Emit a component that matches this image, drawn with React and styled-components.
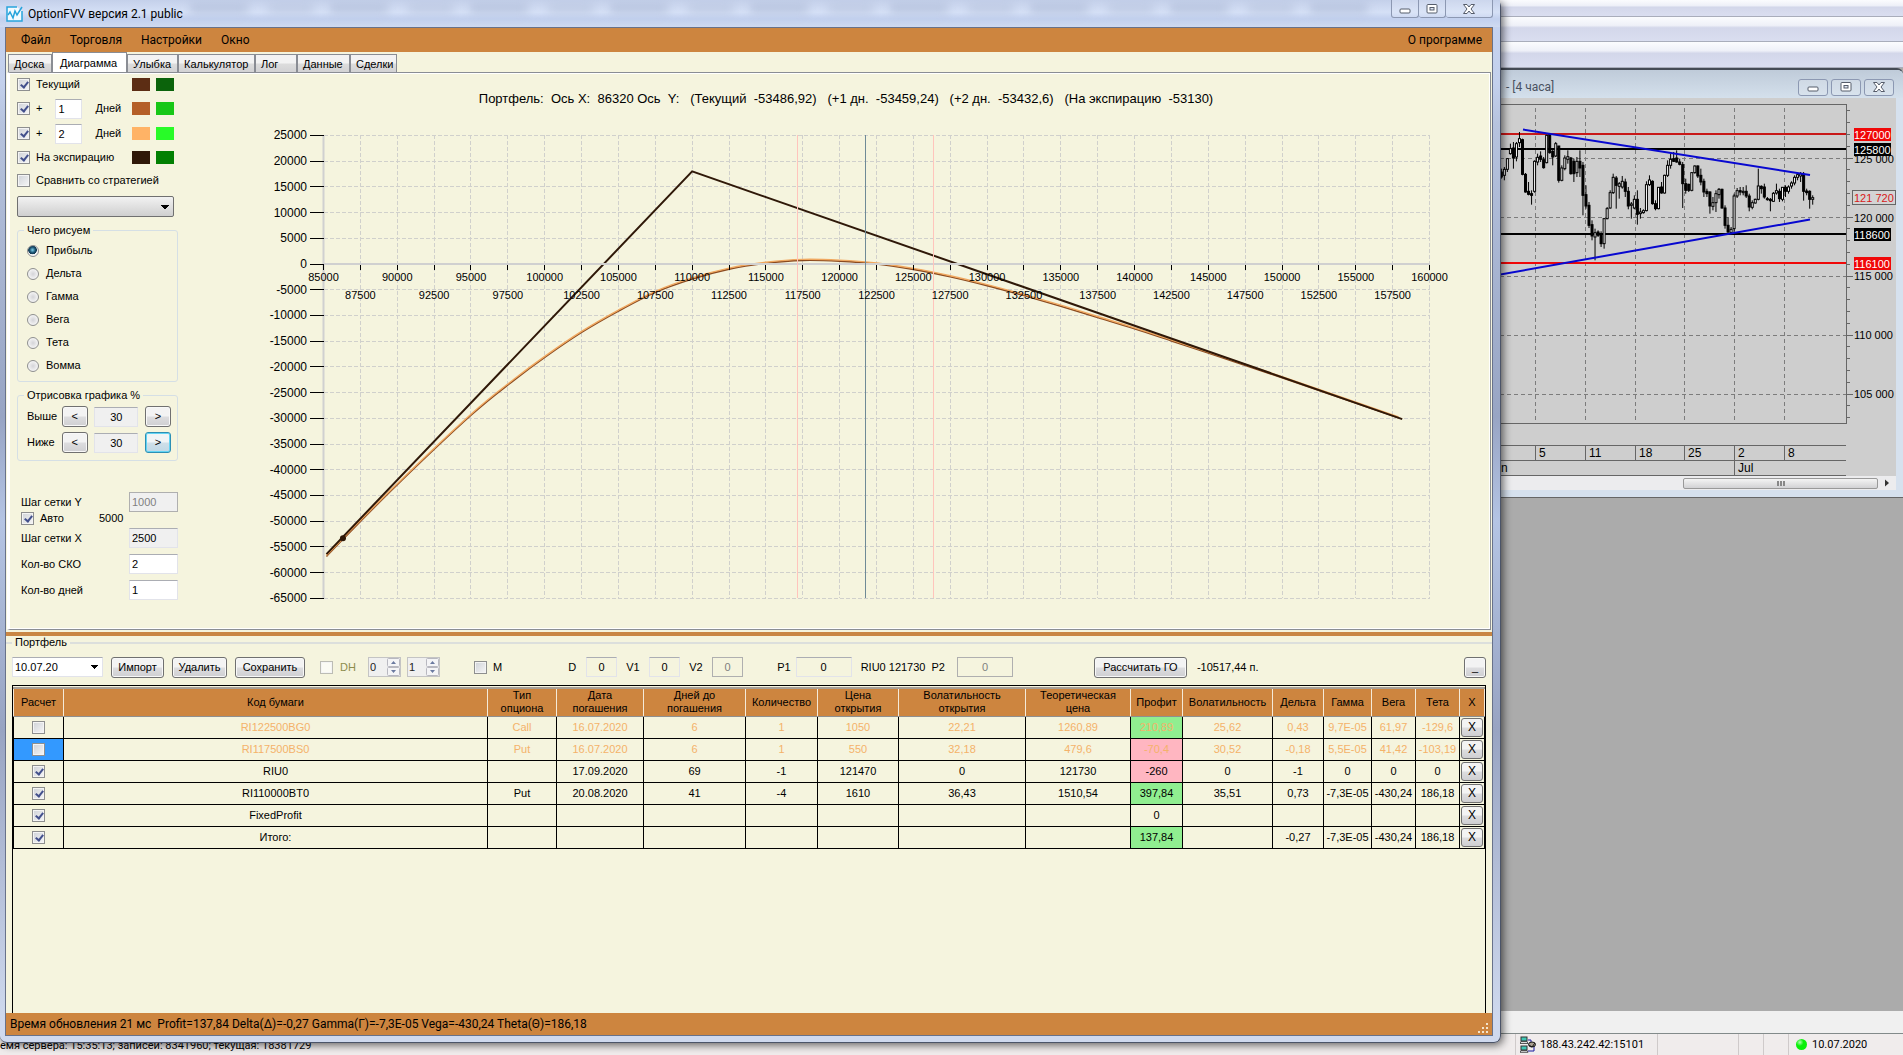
import React, {useState} from 'react';
import styled, {createGlobalStyle} from 'styled-components';

const MENU = ['Файл', 'Торговля', 'Настройки', 'Окно'];

const TABS = [
    {name: 'Доска', width: 44},
    {name: 'Диаграмма', width: 75},
    {name: 'Улыбка', width: 51},
    {name: 'Калькулятор', width: 77},
    {name: 'Лог', width: 42},
    {name: 'Данные', width: 53},
    {name: 'Сделки', width: 47},
];

const GREEKS = ['Прибыль', 'Дельта', 'Гамма', 'Вега', 'Тета', 'Вомма'];

const COLUMNS = [
    {title: 'Расчет', width: 50},
    {title: 'Код бумаги'},
    {title: 'Тип\nопциона', width: 69},
    {title: 'Дата\nпогашения', width: 87},
    {title: 'Дней до\nпогашения', width: 102},
    {title: 'Количество', width: 72},
    {title: 'Цена\nоткрытия', width: 81},
    {title: 'Волатильность\nоткрытия', width: 127},
    {title: 'Теоретическая\nцена', width: 105},
    {title: 'Профит', width: 52},
    {title: 'Волатильность', width: 90},
    {title: 'Дельта', width: 51},
    {title: 'Гамма', width: 48},
    {title: 'Вега', width: 44},
    {title: 'Тета', width: 44},
    {title: 'X', width: 25},
];

const POSITIONS = [
    {off: true, mark: 'up', cells: ['RI122500BG0', 'Call', '16.07.2020', '6', '1', '1050', '22,21', '1260,89', '210,89', '25,62', '0,43', '9,7E-05', '61,97', '-129,6']},
    {off: true, selected: true, mark: 'down', cells: ['RI117500BS0', 'Put', '16.07.2020', '6', '1', '550', '32,18', '479,6', '-70,4', '30,52', '-0,18', '5,5E-05', '41,42', '-103,19']},
    {mark: 'down', cells: ['RIU0', '', '17.09.2020', '69', '-1', '121470', '0', '121730', '-260', '0', '-1', '0', '0', '0']},
    {mark: 'up', cells: ['RI110000BT0', 'Put', '20.08.2020', '41', '-4', '1610', '36,43', '1510,54', '397,84', '35,51', '0,73', '-7,3E-05', '-430,24', '186,18']},
    {cells: ['FixedProfit', '', '', '', '', '', '', '', '0', '', '', '', '', '']},
    {mark: 'up', cells: ['Итого:', '', '', '', '', '', '', '', '137,84', '', '-0,27', '-7,3E-05', '-430,24', '186,18']},
];

const PROFIT_CELL = 8;

// price, profit
const CURRENT = [
    [85200, -56850], [86320, -53487], [90000, -42900], [95000, -29400], [97930, -22560], [100000, -18150],
    [102500, -13300], [105000, -9150], [107500, -5500], [110000, -2900], [112500, -1000], [115000, 150],
    [117500, 700], [120000, 550], [122500, 0], [125000, -1050], [127500, -2470], [130000, -4200],
    [132500, -6130], [135000, -8200], [137500, -10400], [140000, -12600], [142500, -14950],
    [145000, -17300], [150000, -22100], [157900, -29900],
];

const EXPIRATION = [[85200, -56400], [110000, 18000], [158150, -30150]];

// high, open, close, low in thirds of a pixel
const CANDLES = [
    [140, 150, 165, 170], [135, 160, 142, 175], [108, 142, 110, 150], [65, 95, 80, 98], [60, 78, 108, 140],
    [60, 105, 65, 118], [30, 62, 50, 75], [50, 53, 157, 160], [153, 157, 210, 212], [180, 208, 217, 220],
    [205, 215, 220, 248], [115, 208, 118, 212], [95, 120, 106, 130], [88, 102, 112, 120], [105, 113, 137, 140],
    [38, 122, 40, 124], [38, 38, 92, 95], [80, 88, 105, 130], [60, 102, 65, 105], [72, 72, 175, 182],
    [130, 175, 138, 178], [100, 140, 108, 145], [85, 112, 104, 125], [105, 108, 155, 158], [110, 118, 155, 180],
    [105, 152, 118, 165], [85, 118, 138, 165], [120, 130, 220, 280], [190, 218, 252, 260], [240, 250, 310, 318],
    [295, 308, 342, 355], [320, 345, 332, 415], [325, 330, 340, 345], [328, 340, 365, 375], [288, 365, 290, 380],
    [255, 290, 260, 292], [205, 258, 212, 260], [155, 212, 166, 216], [162, 168, 190, 260], [180, 193, 185, 230],
    [162, 195, 178, 200], [170, 180, 208, 225], [195, 208, 252, 262], [240, 250, 246, 290], [220, 258, 232, 262],
    [205, 232, 277, 308], [258, 275, 270, 290], [262, 272, 266, 275], [178, 266, 188, 268], [160, 188, 174, 192],
    [175, 178, 245, 248], [235, 245, 260, 265], [195, 260, 196, 262], [180, 195, 213, 215], [158, 213, 160, 215],
    [115, 160, 130, 165], [95, 130, 112, 140], [90, 110, 118, 120], [85, 108, 120, 122], [110, 120, 127, 130],
    [120, 128, 185, 258], [170, 185, 205, 215], [185, 187, 205, 210], [150, 205, 152, 208], [130, 152, 132, 155],
    [130, 132, 162, 168], [140, 160, 180, 190], [170, 178, 210, 225], [200, 208, 215, 225], [208, 210, 252, 275],
    [225, 253, 242, 265], [205, 242, 215, 270], [198, 218, 202, 230], [200, 202, 258, 260], [250, 258, 310, 320],
    [285, 310, 330, 335], [315, 332, 322, 335], [215, 320, 222, 330], [198, 222, 206, 228], [195, 206, 210, 220],
    [195, 212, 208, 220], [190, 208, 222, 228], [215, 222, 255, 268], [235, 256, 242, 262], [230, 243, 232, 245],
    [140, 232, 192, 235], [190, 193, 200, 215], [185, 195, 225, 230], [225, 230, 233, 236], [228, 232, 236, 268],
    [210, 238, 214, 240], [185, 213, 206, 218], [200, 208, 230, 240], [195, 232, 196, 238], [190, 196, 208, 225],
    [190, 208, 195, 215], [178, 192, 183, 200], [160, 183, 166, 190], [152, 166, 158, 175], [150, 162, 156, 180],
    [150, 157, 208, 236], [200, 207, 212, 220], [205, 208, 232, 260], [220, 232, 227, 248],
];

const px = (price) => 133.5 + (price - 85000) * 1106 / 75000;
const py = (profit) => 191 - profit * 0.005144;

const straight = (points) => points.map(([a, b], i) => `${i ? 'L' : 'M'}${px(a)} ${py(b)}`).join('');

const smooth = (points) => {
    const p = points.map(([a, b]) => [px(a), py(b)]);
    let d = `M${p[0][0]} ${p[0][1]}`;
    for (let i = 0; i < p.length - 1; i++) {
        const p0 = p[i - 1] || p[i];
        const p1 = p[i];
        const p2 = p[i + 1];
        const p3 = p[i + 2] || p2;
        const c1 = [p1[0] + (p2[0] - p0[0]) / 6, p1[1] + (p2[1] - p0[1]) / 6];
        const c2 = [p2[0] - (p3[0] - p1[0]) / 6, p2[1] - (p3[1] - p1[1]) / 6];
        d += `C${c1} ${c2} ${p2}`;
    }
    return d;
};

const range = (from, to, step) => {
    const list = [];
    for (let v = from; v <= to; v += step) list.push(v);
    return list;
};

const CaptionButtons = ({small}) => (
    <Captions $small={small}>
        <CaptionButton type="button" aria-label="Свернуть" $small={small} $width={28}>
            <svg width="14" height="12" viewBox="0 0 14 12"><rect x="2" y="6" width="10" height="4" rx="1" fill="#fff" stroke="#555c6a"/></svg>
        </CaptionButton>
        <CaptionButton type="button" aria-label="Развернуть" $small={small} $width={27}>
            <svg width="14" height="12" viewBox="0 0 14 12">
                <rect x="2" y="1.5" width="10" height="8.5" rx="1" fill="#fff" stroke="#555c6a"/>
                <rect x="5" y="4.5" width="4" height="2.5" fill="#dfe6f3" stroke="#555c6a"/>
            </svg>
        </CaptionButton>
        <CaptionButton type="button" aria-label="Закрыть" $small={small} $width={small ? 30 : 47}>
            <svg width="14" height="12" viewBox="0 0 14 12">
                <path d="M1.5 1.5H5L7 4L9 1.5H12.5L9 6L12.5 10.5H9L7 8L5 10.5H1.5L5 6Z" fill="#fff" stroke="#555c6a"/>
            </svg>
        </CaptionButton>
    </Captions>
);

const ProfitChart = () => (
    <ChartSvg viewBox="0 0 1300 556" preserveAspectRatio="xMinYMin meet">
        <g stroke="#d0d0cc" strokeDasharray="4 2" shapeRendering="crispEdges">
            {range(-65000, 25000, 5000).map((v) => <line key={v} x1={px(85000)} x2={px(160000)} y1={py(v)} y2={py(v)}/>)}
            {range(87500, 160000, 2500).map((v) => <line key={v} x1={px(v)} x2={px(v)} y1={py(25000)} y2={py(-65000)}/>)}
        </g>
        <line x1={px(85000)} x2={px(85000)} y1={py(25000)} y2={py(-65000)} stroke="#d0d0d0" strokeWidth="2"/>
        <g fill="none">
            <path d={smooth(CURRENT)} stroke="#8a4a20" strokeWidth="1.6"/>
            <path d={smooth(CURRENT)} transform="translate(0 -1)" stroke="#f0a860" strokeWidth="1.4"/>
            <path d={straight(EXPIRATION)} stroke="#2f1808" strokeWidth="2"/>
        </g>
        <circle cx={px(86320)} cy={py(-53300)} r="3" fill="#2f1808"/>
        <line x1={px(85000)} x2={px(160000)} y1={py(0)} y2={py(0)} stroke="#d0d0d0" strokeWidth="2"/>
        <g shapeRendering="crispEdges">
            <line x1="607.5" x2="607.5" y1={py(25000)} y2={py(-65000)} stroke="#ffc4bc"/>
            <line x1="743.5" x2="743.5" y1={py(25000)} y2={py(-65000)} stroke="#ffc4bc"/>
            <line x1="675.5" x2="675.5" y1={py(25000)} y2={py(-65000)} stroke="#6f8a96"/>
            {range(-65000, 25000, 5000).map((v) => <line key={v} x1="120" x2={px(85000)} y1={py(v)} y2={py(v)} stroke="#000"/>)}
            {range(85000, 160000, 2500).map((v) => <line key={v} x1={px(v)} x2={px(v)} y1={py(0) + 1} y2={py(0) + 6} stroke="#000"/>)}
        </g>
        <g fontSize="12" textAnchor="end">
            {range(-65000, 25000, 5000).map((v) => <text key={v} x="117" y={py(v) + 4}>{v}</text>)}
        </g>
        <g fontSize="11" textAnchor="middle">
            {range(85000, 160000, 2500).map((v) => (
                <text key={v} x={px(v)} y={py(0) + (v % 5000 ? 35 : 17)}>{v}</text>
            ))}
        </g>
    </ChartSvg>
);

const PriceChart = () => (
    <PriceSvg viewBox="0 0 410 378" preserveAspectRatio="xMaxYMin meet">
        <g stroke="#7c7c7c" strokeDasharray="4 3" shapeRendering="crispEdges">
            {[49, 99, 149, 198, 248, 298].map((x) => <line key={x} x1={x} x2={x} y1="10" y2="325"/>)}
            {[60, 119, 178, 237, 296].map((y) => <line key={y} x1="0" x2="360" y1={y} y2={y}/>)}
        </g>
        <g stroke="#666" fill="none" shapeRendering="crispEdges">
            <path d="M0 6.5H360.5V325.5H0M0 347.5H360M0 362.5H360M0 377.5H360"/>
            <path d="M49.5 347V362M99.5 347V362M149.5 347V362M198.5 347V362M248.5 347V377M298.5 347V362"/>
            {range(-4, 22, 1).map((k) => <line key={k} x1="360" x2={k % 5 ? 364 : 367} y1={60 + k * 11.8} y2={60 + k * 11.8}/>)}
        </g>
        <rect x="0" y="35" width="360" height="2" fill="#c81818"/>
        <rect x="0" y="50" width="360" height="2" fill="#000"/>
        <rect x="0" y="135" width="360" height="2" fill="#000"/>
        <rect x="0" y="164" width="360" height="2" fill="#f00808"/>
        <g transform="translate(10 24) scale(.3333)" stroke="#000" strokeWidth="3">
            {CANDLES.map(([high, open, close, low], i) => {
                const x = 16 + i * 9.07;
                return (
                    <g key={i}>
                        <line x1={x} x2={x} y1={high} y2={low}/>
                        <rect
                            x={x - 3} width="6" y={Math.min(open, close)} height={Math.abs(open - close)}
                            fill={close < open ? '#fff' : '#000'}
                        />
                    </g>
                );
            })}
        </g>
        <path d="M37 31.5L324 77M0 179L324 121.5" stroke="#0808d0" strokeWidth="2" fill="none"/>
        <g fontSize="11">
            <text x="368" y="65">125 000</text>
            <text x="368" y="124">120 000</text>
            <text x="368" y="182">115 000</text>
            <text x="368" y="241">110 000</text>
            <text x="368" y="300">105 000</text>
        </g>
        <rect x="368" y="30" width="37" height="13" fill="#f00808"/>
        <rect x="368" y="45" width="37" height="13" fill="#000"/>
        <rect x="368" y="130" width="37" height="13" fill="#000"/>
        <rect x="368" y="159" width="37" height="13" fill="#f00808"/>
        <rect x="366.5" y="92.5" width="43" height="14" fill="#d4d4d4" stroke="#666"/>
        <g fontSize="11" fill="#fff">
            <text x="368" y="41">127000</text>
            <text x="368" y="56">125800</text>
            <text x="368" y="141">118600</text>
            <text x="368" y="170">116100</text>
            <text x="368" y="104" fill="#d81818">121 720</text>
        </g>
        <g fontSize="12">
            <text x="53" y="359">5</text>
            <text x="103" y="359">11</text>
            <text x="153" y="359">18</text>
            <text x="202" y="359">25</text>
            <text x="252" y="359">2</text>
            <text x="302" y="359">8</text>
            <text x="15" y="374">n</text>
            <text x="252" y="374">Jul</text>
        </g>
    </PriceSvg>
);

const Spinner = ({label, value}) => (
    <SpinnerBox>
        <SpinnerInput aria-label={label} defaultValue={value} disabled/>
        <svg width="13" height="18" viewBox="0 0 13 18">
            <rect x=".5" y=".5" width="12" height="8" rx="1" fill="#f4f4f6" stroke="#b8b8c0"/>
            <rect x=".5" y="9.5" width="12" height="8" rx="1" fill="#f4f4f6" stroke="#b8b8c0"/>
            <path d="M4 6L6.5 3L9 6ZM4 12L6.5 15L9 12Z" fill="#6b7aa0"/>
        </svg>
    </SpinnerBox>
);

const Controls = () => {
    const [greek, setGreek] = useState('Прибыль');
    return (
        <Side>
            <Row $height={23}>
                <CheckLabel><Check defaultChecked/>Текущий</CheckLabel>
                <Swatches><Swatch $color="#5c2d14"/><Swatch $color="#0b630b"/></Swatches>
            </Row>
            <Row $height={25}>
                <CheckLabel><Check defaultChecked/>+</CheckLabel>
                <DayInput id="day1" defaultValue="1"/>
                <label htmlFor="day1">Дней</label>
                <Swatches><Swatch $color="#b45f28"/><Swatch $color="#17c717"/></Swatches>
            </Row>
            <Row $height={25}>
                <CheckLabel><Check defaultChecked/>+</CheckLabel>
                <DayInput id="day2" defaultValue="2"/>
                <label htmlFor="day2">Дней</label>
                <Swatches><Swatch $color="#ffb366"/><Swatch $color="#28fb28"/></Swatches>
            </Row>
            <Row $height={23}>
                <CheckLabel><Check defaultChecked/>На экспирацию</CheckLabel>
                <Swatches><Swatch $color="#2f1808"/><Swatch $color="#028002"/></Swatches>
            </Row>
            <Row $height={23}>
                <CheckLabel><Check/>Сравнить со стратегией</CheckLabel>
            </Row>
            <StrategySelect aria-label="Стратегия"><option></option></StrategySelect>

            <Group>
                <Legend>Чего рисуем</Legend>
                <RadioList>
                    {GREEKS.map((name) => (
                        <RadioLabel key={name}>
                            <Radio name="greek" checked={greek === name} onChange={() => setGreek(name)}/>
                            {name}
                        </RadioLabel>
                    ))}
                </RadioList>
            </Group>

            <Group>
                <Legend>Отрисовка графика %</Legend>
                <RangeList>
                    <RangeRow>
                        <label htmlFor="above">Выше</label>
                        <Button type="button" $width={26}>&lt;</Button>
                        <RangeInput id="above" defaultValue="30" readOnly/>
                        <Button type="button" $width={26}>&gt;</Button>
                    </RangeRow>
                    <RangeRow>
                        <label htmlFor="below">Ниже</label>
                        <Button type="button" $width={26}>&lt;</Button>
                        <RangeInput id="below" defaultValue="30" readOnly/>
                        <Button type="button" $width={26} $active>&gt;</Button>
                    </RangeRow>
                </RangeList>
            </Group>

            <Steps>
                <StepRow $height={20}>
                    <label htmlFor="stepY">Шаг сетки Y</label>
                    <StepInput id="stepY" defaultValue="1000" disabled/>
                </StepRow>
                <StepRow $height={13}>
                    <CheckLabel><Check defaultChecked/>Авто</CheckLabel>
                    <AutoValue>5000</AutoValue>
                </StepRow>
                <StepRow $height={26}>
                    <label htmlFor="stepX">Шаг сетки X</label>
                    <StepInput id="stepX" defaultValue="2500" readOnly/>
                </StepRow>
                <StepRow $height={26}>
                    <label htmlFor="sko">Кол-во СКО</label>
                    <StepInput id="sko" defaultValue="2"/>
                </StepRow>
                <StepRow $height={26}>
                    <label htmlFor="days">Кол-во дней</label>
                    <StepInput id="days" defaultValue="1"/>
                </StepRow>
            </Steps>
        </Side>
    );
};

const Portfolio = () => (
    <PortfolioBox>
        <PortfolioLegend>Портфель</PortfolioLegend>
        <Toolbar>
            <ToolGroup $gap={8}>
                <DateSelect aria-label="Дата"><option>10.07.20</option></DateSelect>
                <Button type="button" $width={53}>Импорт</Button>
                <Button type="button" $width={55}>Удалить</Button>
                <Button type="button" $width={70}>Сохранить</Button>
            </ToolGroup>
            <ToolGroup $gap={6} $left={15}>
                <DimLabel><Check disabled/>DH</DimLabel>
                <SpinnerPair>
                    <Spinner label="DH 1" value="0"/>
                    <Spinner label="DH 2" value="1"/>
                </SpinnerPair>
            </ToolGroup>
            <ToolGroup $gap={6} $left={34}>
                <CheckLabel><Check/>M</CheckLabel>
            </ToolGroup>
            <ToolGroup $gap={9} $left={66}>
                <Field><label htmlFor="d">D</label><NumInput id="d" defaultValue="0"/></Field>
                <Field><label htmlFor="v1">V1</label><NumInput id="v1" defaultValue="0"/></Field>
                <Field><label htmlFor="v2">V2</label><NumInput id="v2" defaultValue="0" disabled/></Field>
            </ToolGroup>
            <ToolGroup $gap={5} $left={34}>
                <label htmlFor="p1">P1</label>
                <NumInput id="p1" defaultValue="0" $wide/>
            </ToolGroup>
            <ToolGroup $gap={6} $left={9}>
                <span>RIU0 121730</span>
                <label htmlFor="p2">P2</label>
            </ToolGroup>
            <ToolGroup $gap={9} $left={12}>
                <NumInput id="p2" defaultValue="0" disabled $wide/>
            </ToolGroup>
            <ToolGroup $gap={10} $left={81}>
                <Button type="button" $width={93}>Рассчитать ГО</Button>
                <span>-10517,44 п.</span>
            </ToolGroup>
            <CollapseButton type="button" $width={22}>_</CollapseButton>
        </Toolbar>
        <TableBox>
            <Table>
                <colgroup>
                    {COLUMNS.map((c) => <col key={c.title} width={c.width}/>)}
                </colgroup>
                <thead>
                    <tr>{COLUMNS.map((c) => <Th key={c.title}>{c.title}</Th>)}</tr>
                </thead>
                <tbody>
                    {POSITIONS.map((row) => (
                        <Tr key={row.cells[0]} $off={row.off}>
                            <Td $selected={row.selected}>
                                <Check aria-label={row.cells[0]} defaultChecked={!row.off}/>
                            </Td>
                            {row.cells.map((cell, i) => (
                                <Td key={i} $mark={i === PROFIT_CELL ? row.mark : undefined}>{cell}</Td>
                            ))}
                            <Td><RemoveButton type="button">X</RemoveButton></Td>
                        </Tr>
                    ))}
                </tbody>
            </Table>
        </TableBox>
    </PortfolioBox>
);

const App = () => (
    <Desktop>
        <GlobalStyle/>
        <TopBar $height={17}/>
        <TopBar $height={25}/>
        <TopBar $height={26}/>
        <Mdi>
            <QuoteWindow>
                <QuoteTitle>
                    - [4 часа]
                    <CaptionButtons small/>
                </QuoteTitle>
                <QuoteBody>
                    <PriceChart/>
                    <ScrollBar>
                        <Thumb><i/><i/><i/></Thumb>
                        <svg width="13" height="12" viewBox="0 0 13 12"><path d="M4 2.5L8 6L4 9.5Z" fill="#333"/></svg>
                    </ScrollBar>
                </QuoteBody>
            </QuoteWindow>
        </Mdi>
        <Strip/>
        <ServerBar>
            <ServerText>емя сервера: 15:35:13; записей: 8341960; текущая: 18381729</ServerText>
            <ServerCell $width={142}>
                <svg width="16" height="17" viewBox="0 0 16 17">
                    <rect x="1" y="1" width="6" height="4" fill="#3fc6b4" stroke="#333"/>
                    <path d="M0 7.500H8L7 5.500H1Z" fill="#ddd" stroke="#333" strokeWidth=".8"/>
                    <rect x="1" y="10" width="6" height="4" fill="#3fc6b4" stroke="#333"/>
                    <path d="M0 16.300H8L7 14.500H1Z" fill="#ddd" stroke="#333" strokeWidth=".8"/>
                    <path d="M8 4H11V6M8 15H14V10" fill="none" stroke="#1818a0"/>
                    <ellipse cx="12" cy="8.500" rx="3.500" ry="2.500" fill="#aaa090" stroke="#111"/>
                    <path d="M9 9L12 11L15 7" fill="none" stroke="#111"/>
                </svg>
                188.43.242.42:15101
            </ServerCell>
            <ServerCell $width={81}/>
            <ServerCell $width={25}/>
            <ServerCell $width={25}/>
            <ServerCell $width={115}>
                <Dot/>
                10.07.2020
            </ServerCell>
        </ServerBar>

        <Window>
            <TitleBar>
                <Ghost/>
                <svg width="17" height="16" viewBox="0 0 17 16">
                    <path d="M11 1H1V15H16V5" fill="#f4fbff" stroke="#27a4dc" strokeWidth="1.500"/>
                    <path d="M2 9L4 6L7 12L9 5L11 9L16 1" fill="none" stroke="#27a4dc" strokeWidth="1.500"/>
                </svg>
                <TitleText>OptionFVV версия 2.1 public</TitleText>
                <CaptionButtons/>
            </TitleBar>
            <Client>
                <MenuBar>
                    {MENU.map((item) => <MenuItem type="button" key={item}>{item}</MenuItem>)}
                    <MenuItem type="button" $right>О программе</MenuItem>
                </MenuBar>
                <TabStrip role="tablist">
                    {TABS.map((tab) => (
                        <Tab type="button" role="tab" key={tab.name} $width={tab.width} $active={tab.name === 'Диаграмма'}>{tab.name}</Tab>
                    ))}
                </TabStrip>
                <TabPanel>
                    <Controls/>
                    <ChartArea>
                        <ChartTitle>
                            {'Портфель:  Ось X:  86320 Ось  Y:   (Текущий  -53486,92)   (+1 дн.  -53459,24)   (+2 дн.  -53432,6)   (На экспирацию  -53130)'}
                        </ChartTitle>
                        <ProfitChart/>
                    </ChartArea>
                </TabPanel>
                <Splitter/>
                <Portfolio/>
                <StatusBar>
                    <span>{'Время обновления 21 мс  Profit=137,84 Delta(Δ)=-0,27 Gamma(Г)=-7,3E-05 Vega=-430,24 Theta(Θ)=186,18'}</span>
                    <svg width="12" height="12" viewBox="0 0 12 12" fill="#f4e4cc">
                        <path d="M8 0h2v2h-2zM4 4h2v2h-2zM8 4h2v2h-2zM0 8h2v2h-2zM4 8h2v2h-2zM8 8h2v2h-2z"/>
                    </svg>
                </StatusBar>
            </Client>
        </Window>
    </Desktop>
);

const GlobalStyle = createGlobalStyle`
    * {
        box-sizing: border-box;
    }

    body {
        margin: 0;
        font-family: "Liberation Sans", Arial, sans-serif;
        font-size: 11px;
        line-height: 13px;
        color: #000;
    }

    button, input, select {
        font: inherit;
        color: inherit;
    }
`;

const Desktop = styled.div`
    position: relative;
    display: flex;
    flex-direction: column;
    height: 100vh;
    overflow: hidden;
    background: #ababab;
`;

const TopBar = styled.div`
    flex: none;
    height: ${(p) => p.$height}px;
    border-bottom: 1px solid #a9adbb;
    background: linear-gradient(#fbfcfe 0, #eef0f8 35%, #d3d7ea 45%, #dadef0 100%);
`;

const Mdi = styled.div`
    flex: 1;
    display: flex;
    justify-content: flex-end;
    align-items: flex-start;
    min-height: 0;
`;

const QuoteWindow = styled.section`
    width: 417px;
    padding: 0 7px 7px 0;
    border-top: 2px solid #454b55;
    border-bottom: 1px solid #666;
    border-radius: 0 6px 0 0;
    background: #d6e1ee;
`;

const QuoteTitle = styled.header`
    display: flex;
    align-items: center;
    justify-content: space-between;
    height: 28px;
    margin-right: -7px;
    padding: 6px 9px 0 20px;
    border-radius: 0 6px 0 0;
    background: linear-gradient(#bfcbd9, #d4e0ec);
    font: 12px/16px Roboto, sans-serif;
    color: #4a5260;
`;

const QuoteBody = styled.div`
    background: #cecece;
`;

const PriceSvg = styled.svg`
    display: block;
    width: 100%;
`;

const ScrollBar = styled.div`
    display: flex;
    align-items: center;
    gap: 3px;
    height: 14px;
    padding: 0 2px 0 197px;
    background: #ececee;
`;

const Thumb = styled.div`
    flex: 1;
    display: flex;
    justify-content: center;
    gap: 1px;
    padding: 2px;
    height: 11px;
    border: 1px solid #999;
    border-radius: 2px;
    background: linear-gradient(#f4f4f4, #d2d2d4);

    i {
        width: 2px;
        background: #888;
    }
`;

const Strip = styled.div`
    height: 23px;
    border-bottom: 1px solid #828a8a;
    background: #f0f0f0;
`;

const ServerBar = styled.footer`
    display: flex;
    height: 21px;
    background: #f0ecec;
    font: 11px/20px Roboto, sans-serif;
`;

const ServerText = styled.div`
    flex: 1;
    line-height: 24px;
    white-space: nowrap;
`;

const ServerCell = styled.div`
    display: flex;
    align-items: center;
    gap: 4px;
    width: ${(p) => p.$width}px;
    padding-left: 4px;
    border-left: 1px solid #cfcaca;
`;

const Dot = styled.i`
    width: 11px;
    height: 11px;
    margin: 0 1px 0 3px;
    border-radius: 50%;
    background: radial-gradient(circle at 35% 30%, #b0ffb0, #08f008 35%);
`;

const Window = styled.main`
    position: absolute;
    top: 0;
    right: 402px;
    bottom: 12px;
    left: 0;
    display: flex;
    flex-direction: column;
    padding: 0 7px 6px 5px;
    border: solid #4b5468;
    border-width: 0 1px 1px 0;
    border-radius: 0 6px 7px 7px;
    background: linear-gradient(#c6d4f0 0, #c3d0ec 8%, #b6c3de 12%, #98a5c4 40%, #b4c4e4 50%, #98a4c2 70%, #cfd9ee 98%);
    box-shadow: 2px 2px 8px rgba(0, 0, 0, .6);
`;

const TitleBar = styled.header`
    position: relative;
    display: flex;
    align-items: center;
    gap: 5px;
    height: 27px;
    margin: 0 -7px 0 -5px;
    padding-left: 6px;
    background: linear-gradient(#c4d0ea, #d5e0f6 45%, #c2d0ee 70%, #cfdaf0);
`;

const Ghost = styled.div`
    position: absolute;
    top: 3px;
    right: 130px;
    left: 190px;
    height: 11px;
    background: repeating-linear-gradient(90deg, #a9b6d2 0 54px, transparent 62px 74px, #b4c0da 82px 120px, transparent 128px 140px);
    filter: blur(4px);
    opacity: .55;
`;

const TitleText = styled.h1`
    position: relative;
    margin: 0;
    font: 12px/16px Roboto, sans-serif;
`;

const Captions = styled.div`
    position: relative;
    display: flex;
    align-self: ${(p) => (p.$small ? 'center' : 'flex-start')};
    gap: ${(p) => (p.$small ? 3 : 0)}px;
    height: ${(p) => (p.$small ? 17 : 18)}px;
    margin: ${(p) => (p.$small ? '0' : '0 7px 0 auto')};
`;

const CaptionButton = styled.button`
    display: flex;
    align-items: center;
    justify-content: center;
    width: ${(p) => (p.$small ? 30 : p.$width)}px;
    padding: 0;
    border: 1px solid #8c98b2;
    border-width: ${(p) => (p.$small ? '1px' : '0 1px 1px 0')};
    border-radius: ${(p) => (p.$small ? '3px' : '0 0 3px 3px')};
    background: rgba(255, 255, 255, .15);

    &:first-child {
        border-left-width: 1px;
    }
`;

const Client = styled.div`
    flex: 1;
    display: flex;
    flex-direction: column;
    min-height: 0;
    border: 1px solid #68728a;
    background: #f5f4de;
`;

const MenuBar = styled.nav`
    display: flex;
    gap: 19px;
    height: 24px;
    padding: 0 10px 0 15px;
    background: #cd853f;
`;

const MenuItem = styled.button`
    margin-left: ${(p) => (p.$right ? 'auto' : '0')};
    padding: 0;
    border: 0;
    background: none;
    font: 12px/24px Roboto, sans-serif;
`;

const TabStrip = styled.div`
    display: flex;
    align-items: flex-end;
    height: 20px;
    padding-left: 2px;
`;

const Tab = styled.button`
    width: ${(p) => p.$width}px;
    height: ${(p) => (p.$active ? 20 : 18)}px;
    padding: 0 5px;
    border: 1px solid #8a8d94;
    border-bottom: 0;
    background: ${(p) => (p.$active ? '#fff' : 'linear-gradient(#f3f3f3 45%, #dcdcdc 55%, #d2d2d4)')};
    line-height: 18px;
    text-align: left;
    ${(p) => p.$active && 'padding: 0 7px;'}
`;

const TabPanel = styled.div`
    display: flex;
    margin: 0 1px 1px 1px;
    border: 1px solid #8a8d94;
    border-left: 3px solid #fff;
    outline: 1px solid #fff;
    outline-offset: -2px;
`;

const Side = styled.div`
    display: flex;
    flex-direction: column;
    flex: none;
    width: 180px;
    padding: 0 0 0 7px;
`;

const Row = styled.div`
    display: flex;
    align-items: center;
    width: 157px;
    height: ${(p) => p.$height}px;
`;

const CheckLabel = styled.label`
    display: flex;
    align-items: center;
    gap: 6px;
    white-space: nowrap;
`;

const DimLabel = styled(CheckLabel)`
    gap: 7px;
    width: 42px;
    color: #8d8c4c;
`;

const Check = styled.input.attrs({type: 'checkbox'})`
    appearance: none;
    display: inline-block;
    flex: none;
    position: relative;
    width: 13px;
    height: 13px;
    margin: 0;
    border: 1px solid #8e8f8f;
    background: linear-gradient(135deg, #cfd2d8, #f6f6f6);
    box-shadow: inset 0 0 0 1px #f4f4f4;
    vertical-align: middle;

    &:checked::after {
        content: '';
        position: absolute;
        top: 1px;
        left: 4px;
        width: 3px;
        height: 6px;
        border: solid #43508c;
        border-width: 0 2px 2px 0;
        transform: rotate(38deg);
    }

    &:disabled {
        border-color: #bcbcb4;
        background: #fbfbf4;
    }
`;

const Swatches = styled.div`
    display: flex;
    gap: 6px;
    margin-left: auto;
`;

const Swatch = styled.div`
    width: 18px;
    height: 13px;
    background: ${(p) => p.$color};
`;

const TextInput = styled.input`
    height: 20px;
    padding: 0 2px;
    border: 1px solid #e2e3ea;
    border-top-color: #abadb3;
    background: #fff;

    &:read-only {
        background: #f0f0f0;
    }

    &:disabled {
        border-color: #afafaf;
        color: #808080;
    }
`;

const DayInput = styled(TextInput)`
    width: 27px;
    margin: 0 13px;
`;

const StepInput = styled(TextInput)`
    width: 49px;
    font-size: 11px;
`;

const RangeInput = styled(TextInput)`
    width: 44px;
    font-size: 11px;
    text-align: center;
`;

const NumInput = styled(TextInput)`
    width: ${(p) => (p.$wide ? 56 : 31)}px;
    background: #f5f4de;
    text-align: center;

    &:disabled {
        background: #f5f4de;
    }
`;

const Select = styled.select`
    appearance: none;
    padding: 0 4px;
    background-image:
        linear-gradient(to top right, transparent 50%, #000 50%),
        linear-gradient(to top left, transparent 50%, #000 50%),
        ${(p) => p.$fill};
    background-position: right 8px center, right 4px center, 0 0;
    background-size: 4px 4px, 4px 4px, 100% 100%;
    background-repeat: no-repeat;
`;

const StrategySelect = styled(Select).attrs({$fill: 'linear-gradient(#f2f2f2, #cfcfcf)'})`
    width: 157px;
    height: 21px;
    margin-top: 4px;
    border: 1px solid #707070;
    border-radius: 2px;
`;

const DateSelect = styled(Select).attrs({$fill: 'linear-gradient(#fff, #fff)'})`
    width: 91px;
    height: 20px;
    padding: 0 2px;
    border: 1px solid #e2e3ea;
    border-top-color: #abadb3;
`;

const Group = styled.fieldset`
    width: 161px;
    margin: 6px 0 0;
    padding: 0 6px 4px 9px;
    border: 1px solid #d5dfe5;
    border-radius: 3px;
`;

const Legend = styled.legend`
    margin-left: -3px;
    padding: 0 3px;
    line-height: 14px;
`;

const RadioList = styled.div`
    padding-top: 2px;
`;

const RadioLabel = styled.label`
    display: flex;
    align-items: center;
    gap: 7px;
    height: 23px;
`;

const Radio = styled.input.attrs({type: 'radio'})`
    appearance: none;
    width: 12px;
    height: 12px;
    margin: 0;
    border: 1px solid #8e8f8f;
    border-radius: 50%;
    background: radial-gradient(#d4d4d8, #f4f4f4 70%);

    &:checked {
        background: radial-gradient(circle at 45% 40%, #7fd0ec 0, #17506e 35%, #173c54 50%, #f4f4f4 56%);
    }
`;

const RangeList = styled.div`
    display: flex;
    flex-direction: column;
    gap: 5px;
    padding: 4px 0 3px;
`;

const RangeRow = styled.div`
    display: flex;
    justify-content: space-between;
    align-items: center;

    label {
        width: 28px;
    }
`;

const Button = styled.button`
    flex: none;
    width: ${(p) => p.$width}px;
    height: 21px;
    padding: 0;
    border: 1px solid ${(p) => (p.$active ? '#2c8fb4' : '#707070')};
    border-radius: 3px;
    background: ${(p) => (p.$active
        ? 'linear-gradient(#f0f4f6 48%, #cfdfe8 52%, #bfd8e6)'
        : 'linear-gradient(#f3f3f3 48%, #dddddf 52%, #cfcfd2)')};
    box-shadow: inset 0 0 0 1px ${(p) => (p.$active ? '#62d4f4' : '#f8f8f8')};
    white-space: nowrap;
`;

const Steps = styled.div`
    margin-top: 31px;
    padding: 0 0 26px 4px;
    width: 161px;
`;

const StepRow = styled.div`
    display: flex;
    align-items: center;
    justify-content: space-between;
    height: ${(p) => p.$height}px;
`;

const AutoValue = styled.span`
    width: 79px;
    font-size: 11px;
`;

const ChartArea = styled.div`
    flex: 1;
    display: grid;
    align-items: start;
    min-width: 0;

    > * {
        grid-area: 1 / 1;
    }
`;

const ChartTitle = styled.h2`
    margin: 0;
    padding: 18px 0 0 12px;
    font-size: 13px;
    font-weight: normal;
    line-height: 16px;
    text-align: center;
    white-space: pre;
`;

const ChartSvg = styled.svg`
    display: block;
    width: 100%;
`;

const Splitter = styled.div`
    flex: none;
    height: 4px;
    margin-top: 1px;
    background: #c98645;
`;

const PortfolioBox = styled.fieldset`
    flex: 1;
    display: flex;
    flex-direction: column;
    min-width: 0;
    min-height: 0;
    margin: 0;
    padding: 0 6px;
    border: 0 solid #dcdfdc;
    border-top-width: 2px;
`;

const PortfolioLegend = styled.legend`
    padding: 0 3px;
`;

const Toolbar = styled.div`
    display: flex;
    align-items: center;
    height: 36px;
`;

const ToolGroup = styled.div`
    display: flex;
    align-items: center;
    gap: ${(p) => p.$gap}px;
    margin-left: ${(p) => p.$left || 0}px;
    white-space: nowrap;
`;

const SpinnerPair = styled.div`
    display: flex;
    gap: 6px;
`;

const SpinnerBox = styled.div`
    display: flex;
    width: 33px;
    height: 20px;
    border: 1px solid #c4c4c4;
    background: #f0f0f0;
`;

const SpinnerInput = styled.input`
    flex: 1;
    min-width: 0;
    padding: 0 1px;
    border: 0;
    background: none;
    color: #222;
`;

const Field = styled.div`
    display: flex;
    align-items: center;

    label {
        width: 23px;
    }

    &:first-child label {
        width: 18px;
    }
`;

const CollapseButton = styled(Button)`
    margin-left: auto;
`;

const TableBox = styled.div`
    flex: 1;
    padding-top: 1px;
    border: 1px solid #000;
    border-bottom: 0;
`;

const Table = styled.table`
    width: 100%;
    border-collapse: collapse;
    table-layout: fixed;
    text-align: center;
`;

const Th = styled.th`
    height: 28px;
    padding: 0;
    border: 1px solid #f5ead8;
    border-top: 2px solid #a8a098;
    border-bottom: 1px solid #8f8f8f;
    background: #cd853f;
    font-weight: normal;
    white-space: pre-line;
`;

const Tr = styled.tr`
    height: 22px;
    color: ${(p) => (p.$off ? '#f4b26a' : '#000')};
`;

const MARKS = {up: '#90ee90', down: '#ffb6c1'};

const Td = styled.td`
    height: 22px;
    padding: 0;
    border: 1px solid #000;
    background: ${(p) => (p.$selected ? '#3399ff' : MARKS[p.$mark] || 'none')};
    white-space: nowrap;
    overflow: hidden;
`;

const RemoveButton = styled.button`
    display: block;
    width: 22px;
    height: 19px;
    margin: 0 auto;
    padding: 0;
    border: 1px solid #707070;
    border-radius: 3px;
    background: linear-gradient(#f3f3f3 48%, #dddddf 52%, #cfcfd2);
    font-size: 12px;
    color: #000;
`;

const StatusBar = styled.footer`
    display: flex;
    align-items: center;
    justify-content: space-between;
    height: 22px;
    padding: 0 2px 0 4px;
    background: #cd853f;
    font: 12px/22px Roboto, sans-serif;
    white-space: pre;

    svg {
        align-self: flex-end;
    }
`;

export default App;
